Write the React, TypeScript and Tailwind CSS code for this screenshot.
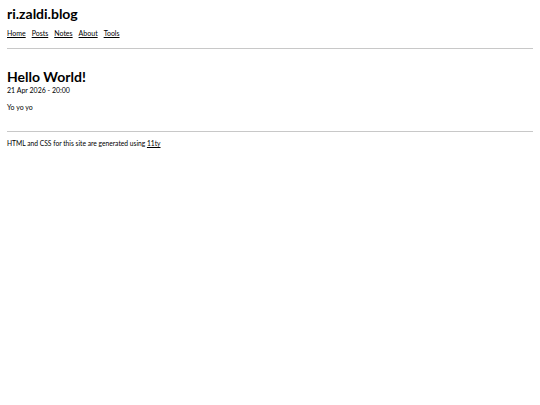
export default function App() {
	return (
		<div className="min-h-[405px] bg-white px-[7px] pt-[5px] text-black" style={{ fontFamily: "Lato, 'Noto Sans', sans-serif" }}>
			<header>
				<h1 className="text-[14px] font-bold leading-[18px]">ri.zaldi.blog</h1>
				<nav className="mt-[6px] flex gap-[6px] text-[7px] leading-[9px]">
					<a className="underline" href="#">Home</a>
					<a className="underline" href="#">Posts</a>
					<a className="underline" href="#">Notes</a>
					<a className="underline" href="#">About</a>
					<a className="underline" href="#">Tools</a>
				</nav>
			</header>
			<hr className="mt-[10px] border-t border-[#c8c8c8]" />
			<main className="mt-[19px]">
				<h2 className="text-[14px] font-bold leading-[18px]">Hello World!</h2>
				<p className="text-[7px] leading-[9px]">21 Apr 2026 - 20:00</p>
				<p className="mt-[8px] text-[7px] leading-[9px]">Yo yo yo</p>
			</main>
			<hr className="mt-[19px] border-t border-[#c8c8c8]" />
			<footer className="mt-[7px] text-[6.7px] leading-[9px]">
				HTML and CSS for this site are generated using <a className="underline" href="#">11ty</a>
			</footer>
		</div>
	);
}
